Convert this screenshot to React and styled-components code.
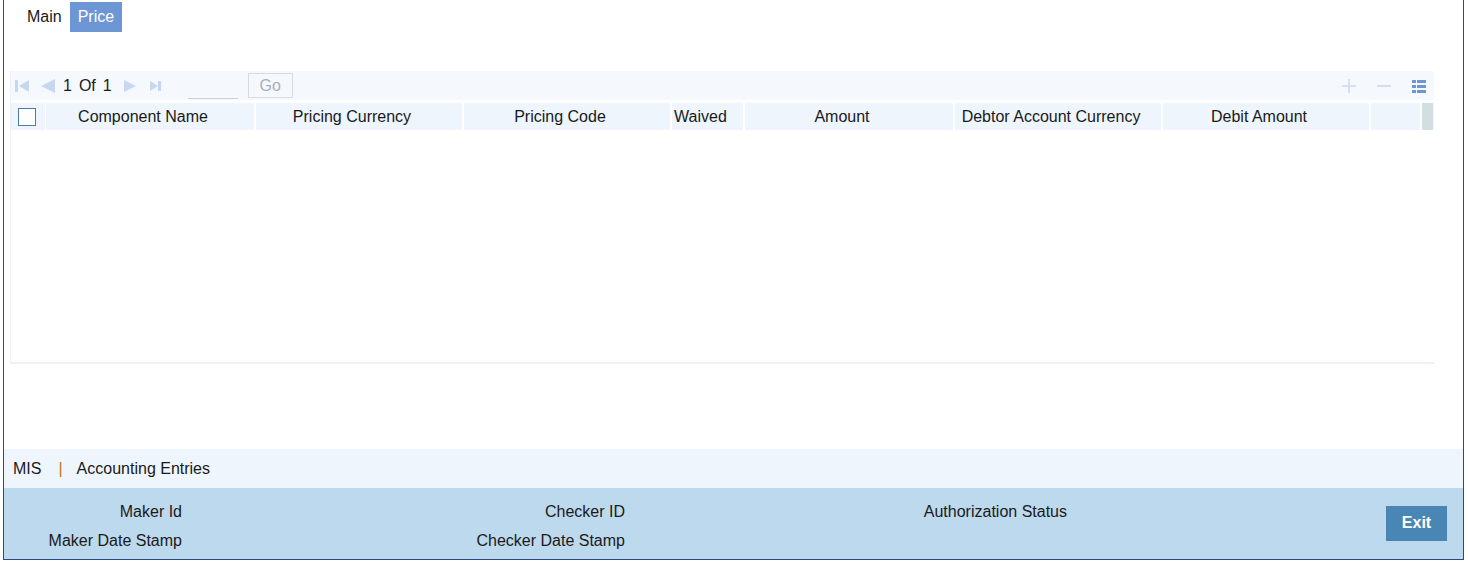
import React from "react";
import styled, { createGlobalStyle } from "styled-components";

const GlobalStyle = createGlobalStyle`
  html, body { margin: 0; padding: 0; background: #fff; }
  body { font-family: "Liberation Sans", Arial, sans-serif; font-size: 16px; color: #1a1a1a; }
`;

const Frame = styled.div`
  margin-left: 3px;
  width: 1459px;
  height: 559px;
  border: 1px solid #2b4a80;
  border-top: none;
  display: flex;
  flex-direction: column;
`;

const Tabs = styled.div`
  display: flex;
  padding: 2px 0 0 15px;
  height: 30px;
`;

const Tab = styled.div`
  height: 30px;
  line-height: 30px;
  padding: 0 8px;
  background: ${({ $active }) => ($active ? "#6d96d4" : "transparent")};
  color: ${({ $active }) => ($active ? "#fff" : "#1a1a1a")};
`;

const GridBox = styled.div`
  margin: 39px 0 0 6px;
  width: 1424px;
  height: 293px;
  border-left: 1px solid #eef1fa;
  border-bottom: 2px solid #eef1fa;
  box-sizing: border-box;
  display: flex;
  flex-direction: column;
`;

const Toolbar = styled.div`
  height: 29px;
  background: #f5f8fd;
  display: flex;
  align-items: center;
  padding-left: 3px;
  margin-bottom: 3px;
`;

const NavIcon = styled.svg`
  width: 16px;
  height: 16px;
  margin-right: ${({ $gap }) => $gap || 0}px;
  fill: #c6d8ef;
`;

const PageText = styled.span`
  margin-right: ${({ $gap }) => $gap || 0}px;
  color: #1a1a1a;
`;

const PageInput = styled.div`
  width: 50px;
  height: 27px;
  border-bottom: 1px solid #c8d0d8;
  box-sizing: border-box;
  margin: 0 10px 0 24px;
`;

const GoButton = styled.div`
  width: 45px;
  height: 25px;
  border: 1px solid #d4dbe3;
  box-sizing: border-box;
  color: #a9afb6;
  text-align: center;
  line-height: 23px;
`;

const ToolIcons = styled.div`
  margin-left: auto;
  display: flex;
  align-items: center;
  gap: 19px;
  padding-right: 7px;
`;

const ToolIcon = styled.svg`
  width: 16px;
  height: 16px;
`;

const HeaderRow = styled.div`
  display: grid;
  grid-template-columns: 35px 210px 208px 208px 73px 210px 208px 208px 51px 11px;
  height: 27px;
  background: #eef5fd;
`;

const HeadCell = styled.div`
  border-right: 2px solid #fff;
  display: flex;
  align-items: center;
  justify-content: center;
  padding-right: 14px;
  white-space: nowrap;
  &:last-child { border-right: none; }
`;

const CheckCell = styled.div`
  border-right: 1px solid #fff;
  display: flex;
  align-items: center;
  padding-left: 7px;
`;

const Check = styled.div`
  width: 18px;
  height: 18px;
  border: 1px solid #4b7aa8;
  background: #fff;
  box-sizing: border-box;
`;

const ScrollCell = styled.div`
  background: #d1dfe3;
`;

const Spacer = styled.div`
  flex: 1;
`;

const LinkBar = styled.div`
  height: 39px;
  background: #eef5fd;
  display: flex;
  align-items: center;
  padding-left: 9px;
`;

const Sep = styled.span`
  color: #b8780c;
  padding: 0 14px 0 17px;
`;

const Footer = styled.div`
  height: 71px;
  background: #bdd9ed;
  display: flex;
  align-items: center;
`;

const Audit = styled.div`
  display: grid;
  grid-template-columns: 178px 265px 178px 265px 177px;
  grid-auto-rows: 20px;
  row-gap: 9px;
  align-self: flex-start;
  padding-top: 15px;
`;

const Label = styled.div`
  text-align: right;
  grid-column: ${({ $col }) => $col};
  white-space: nowrap;
`;

const ExitButton = styled.button`
  margin-left: auto;
  margin-right: 16px;
  width: 61px;
  height: 35px;
  border: none;
  background: #4a86b4;
  color: #fff;
  font-family: "Liberation Sans", Arial, sans-serif;
  font-weight: bold;
  font-size: 16px;
  padding: 0 0 2px;
`;

const columns = [
  "Component Name",
  "Pricing Currency",
  "Pricing Code",
  "Waived",
  "Amount",
  "Debtor Account Currency",
  "Debit Amount",
  "",
];

export default function App() {
  return (
    <>
      <GlobalStyle />
      <Frame>
        <Tabs>
          <Tab>Main</Tab>
          <Tab $active>Price</Tab>
        </Tabs>
        <GridBox>
          <Toolbar>
            <NavIcon viewBox="0 0 16 16" $gap={10}>
              <rect x="1" y="2" width="3" height="12" />
              <polygon points="15,2 15,14 5,8" />
            </NavIcon>
            <NavIcon viewBox="0 0 16 16" $gap={7}>
              <polygon points="15,1 15,15 1,8" />
            </NavIcon>
            <PageText $gap={7}>1</PageText>
            <PageText $gap={7}>Of</PageText>
            <PageText $gap={10}>1</PageText>
            <NavIcon viewBox="0 0 16 16" $gap={10}>
              <polygon points="2,2 2,14 14,8" />
            </NavIcon>
            <NavIcon viewBox="0 0 16 16">
              <polygon points="2,3 2,13 10,8" />
              <rect x="10" y="3" width="3" height="10" />
            </NavIcon>
            <PageInput />
            <GoButton>Go</GoButton>
            <ToolIcons>
              <ToolIcon viewBox="0 0 16 16">
                <rect x="7" y="1" width="2" height="14" fill="#d3e0f3" />
                <rect x="1" y="7" width="14" height="2" fill="#d3e0f3" />
              </ToolIcon>
              <ToolIcon viewBox="0 0 16 16">
                <rect x="1" y="7" width="14" height="2" fill="#d3e0f3" />
              </ToolIcon>
              <ToolIcon viewBox="0 0 16 16">
                <rect x="1" y="2" width="4" height="3" fill="#6d96d4" />
                <rect x="6" y="2" width="9" height="3" fill="#6d96d4" />
                <rect x="1" y="7" width="4" height="3" fill="#6d96d4" />
                <rect x="6" y="7" width="9" height="3" fill="#6d96d4" />
                <rect x="1" y="12" width="4" height="3" fill="#6d96d4" />
                <rect x="6" y="12" width="9" height="3" fill="#6d96d4" />
              </ToolIcon>
            </ToolIcons>
          </Toolbar>
          <HeaderRow>
            <CheckCell>
              <Check />
            </CheckCell>
            {columns.map((c, i) => (
              <HeadCell key={i}>{c}</HeadCell>
            ))}
            <ScrollCell />
          </HeaderRow>
        </GridBox>
        <Spacer />
        <LinkBar>
          <span>MIS</span>
          <Sep>|</Sep>
          <span>Accounting Entries</span>
        </LinkBar>
        <Footer>
          <Audit>
            <Label $col={1}>Maker Id</Label>
            <Label $col={3}>Checker ID</Label>
            <Label $col={5}>Authorization Status</Label>
            <Label $col={1}>Maker Date Stamp</Label>
            <Label $col={3}>Checker Date Stamp</Label>
          </Audit>
          <ExitButton>Exit</ExitButton>
        </Footer>
      </Frame>
    </>
  );
}
